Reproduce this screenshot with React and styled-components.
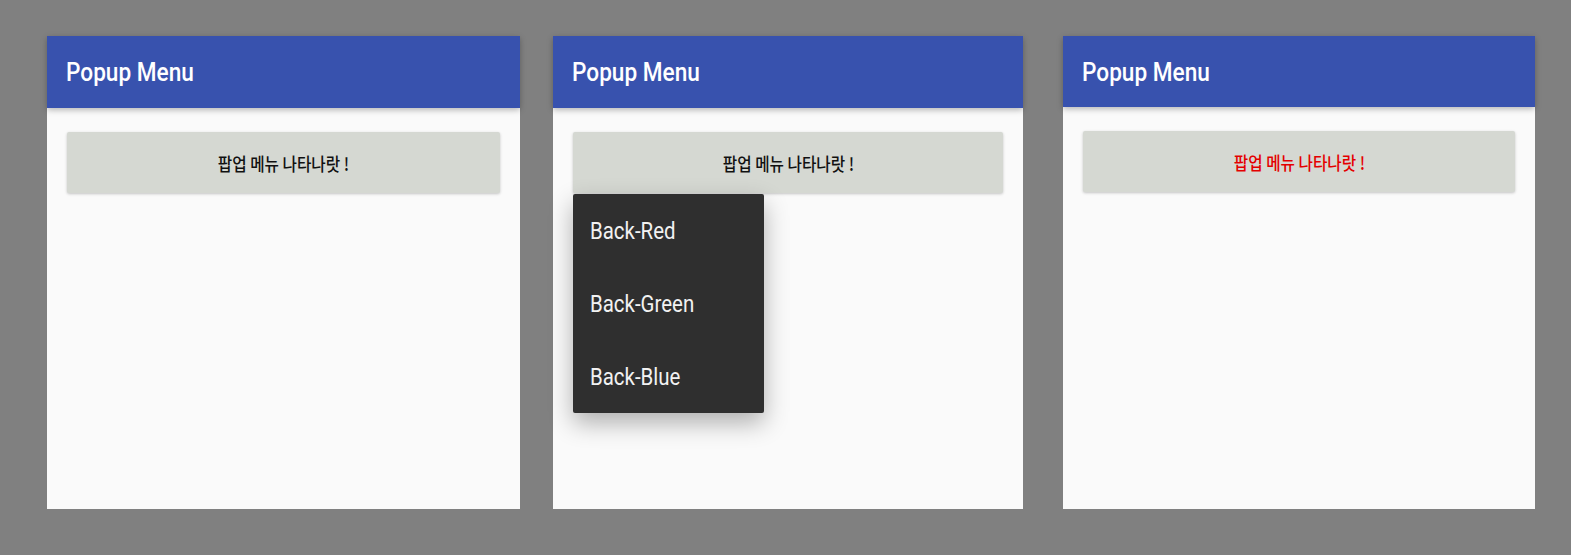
import styled, { createGlobalStyle } from "styled-components";

const GlobalStyle = createGlobalStyle`
  html, body {
    margin: 0;
    padding: 0;
    background: #808080;
  }
  body {
    font-family: Roboto, "Noto Sans CJK KR", sans-serif;
  }
`;

const Page = styled.div`
  display: flex;
  align-items: flex-start;
  padding: 36px 0 0 47px;
  height: 555px;
  box-sizing: border-box;
`;

const Phone = styled.div`
  width: ${(p) => p.width}px;
  height: 473px;
  margin-right: ${(p) => p.gap}px;
  background: #fafafa;
  display: flex;
  flex-direction: column;
  flex-shrink: 0;
`;

const AppBar = styled.header`
  position: relative;
  z-index: 1;
  height: ${(p) => p.height}px;
  background: #3852ae;
  display: flex;
  align-items: center;
  padding-left: 19px;
  box-shadow: 0 2px 6px rgba(0, 0, 0, 0.28);
  color: #fff;
  font-size: 26px;
  font-weight: 500;
`;

/* the screenshots are a bit squashed horizontally */
const Squeeze = styled.span`
  display: inline-block;
  white-space: nowrap;
  transform: scaleX(0.87);
  transform-origin: ${(p) => p.origin || "left"} center;
`;

const Content = styled.main`
  padding: 24px 20px 0 20px;
`;

const Anchor = styled.div`
  position: relative;
`;

const Button = styled.button`
  width: 100%;
  height: 61px;
  border: none;
  border-radius: 2px;
  background: #d5d8d2;
  box-shadow: 0 1px 3px rgba(0, 0, 0, 0.22);
  display: flex;
  align-items: center;
  justify-content: center;
  font-family: "Noto Sans CJK KR", sans-serif;
  font-size: 18px;
  font-weight: 500;
  color: ${(p) => (p.$active ? "#e40000" : "#111")};
  padding: 0;
`;

const Menu = styled.ul`
  position: absolute;
  top: 62px;
  left: 0;
  width: 191px;
  margin: 0;
  padding: 0;
  list-style: none;
  background: #2f2f2f;
  border-radius: 2px;
  box-shadow: 0 10px 24px rgba(0, 0, 0, 0.3);
`;

const MenuItem = styled.li`
  height: 73px;
  display: flex;
  align-items: center;
  padding-left: 17px;
  color: #f2f2f2;
  font-size: 23.5px;
`;

const screens = [
  { width: 473, gap: 33, bar: 72, menu: false, active: false },
  { width: 470, gap: 40, bar: 72, menu: true, active: false },
  { width: 472, gap: 0, bar: 71, menu: false, active: true },
];

function Screen({ width, gap, bar, menu, active }) {
  return (
    <Phone width={width} gap={gap}>
      <AppBar height={bar}>
        <Squeeze>Popup Menu</Squeeze>
      </AppBar>
      <Content>
        <Anchor>
          <Button $active={active}>
            <Squeeze origin="center">팝업 메뉴 나타나랏 !</Squeeze>
          </Button>
          {menu && (
            <Menu>
              {["Back-Red", "Back-Green", "Back-Blue"].map((label) => (
                <MenuItem key={label}>
                  <Squeeze>{label}</Squeeze>
                </MenuItem>
              ))}
            </Menu>
          )}
        </Anchor>
      </Content>
    </Phone>
  );
}

export default function App() {
  return (
    <>
      <GlobalStyle />
      <Page>
        {screens.map((s, i) => (
          <Screen key={i} {...s} />
        ))}
      </Page>
    </>
  );
}
